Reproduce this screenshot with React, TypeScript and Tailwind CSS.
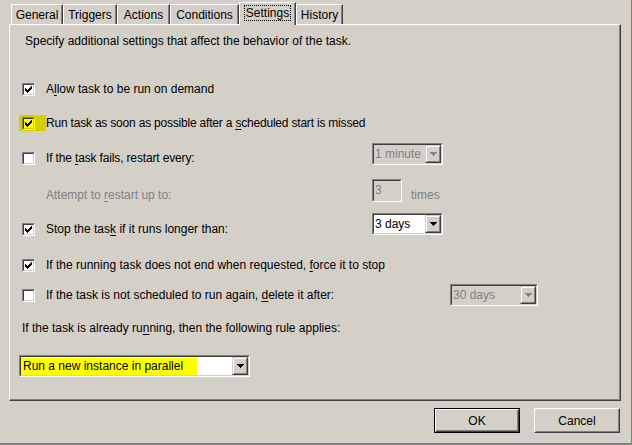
import React from "react";

const FONT = "font-['Tahoma','Liberation_Sans',Arial,sans-serif]";

function CheckMark() {
  return (
    <svg width="7" height="7" viewBox="0 0 7 7" shapeRendering="crispEdges" className="block">
      <path
        fill="#000"
        d="M6 0h1v1h-1z M5 1h2v1h-2z M0 2h1v1h-1z M4 2h3v1h-3z M0 3h2v1h-2z M3 3h3v1h-3z M0 4h5v1h-5z M1 5h3v1h-3z M2 6h1v1h-1z"
      />
    </svg>
  );
}

function Checkbox({ checked, yellow }: { checked: boolean; yellow?: boolean }) {
  return (
    <div
      className={
        "w-[13px] h-[13px] shrink-0 border border-t-[#808080] border-l-[#808080] " +
        (yellow ? "border-r-[#ffff00] border-b-[#ffff00]" : "border-r-white border-b-white")
      }
    >
      <div
        className={
          "w-full h-full border border-t-[#404040] border-l-[#404040] flex items-center justify-center " +
          (yellow
            ? "border-r-[#d4d000] border-b-[#d4d000] bg-[#ffff00]"
            : "border-r-[#d4d0c8] border-b-[#d4d0c8] bg-white")
        }
      >
        {checked ? <CheckMark /> : null}
      </div>
    </div>
  );
}

function Arrow({ disabled }: { disabled?: boolean }) {
  return (
    <svg width="7" height="4" viewBox="0 0 7 4" shapeRendering="crispEdges" className="block">
      <path
        fill={disabled ? "#808080" : "#000"}
        d="M0 0h7v1h-7z M1 1h5v1h-5z M2 2h3v1h-3z M3 3h1v1h-1z"
      />
    </svg>
  );
}

function Sunken({
  className,
  inner,
  children,
}: {
  className?: string;
  inner?: string;
  children?: React.ReactNode;
}) {
  return (
    <div
      className={
        "border border-t-[#808080] border-l-[#808080] border-r-white border-b-white shrink-0 " +
        (className || "")
      }
    >
      <div
        className={
          "w-full h-full border border-t-[#404040] border-l-[#404040] border-r-[#d4d0c8] border-b-[#d4d0c8] " +
          (inner || "")
        }
      >
        {children}
      </div>
    </div>
  );
}

function ArrowButton({ disabled }: { disabled?: boolean }) {
  return (
    <div className="w-[16px] h-full border border-t-[#d4d0c8] border-l-[#d4d0c8] border-r-[#404040] border-b-[#404040] shrink-0">
      <div className="w-full h-full border border-t-white border-l-white border-r-[#808080] border-b-[#808080] bg-[#d4d0c8] flex items-center justify-center">
        <Arrow disabled={disabled} />
      </div>
    </div>
  );
}

function Combo({
  text,
  disabled,
  className,
}: {
  text: string;
  disabled?: boolean;
  className: string;
}) {
  return (
    <Sunken
      className={className}
      inner={"flex " + (disabled ? "bg-[#d4d0c8]" : "bg-white")}
    >
      <div
        className={
          "flex-1 flex items-center pl-[1px] leading-none " +
          (disabled ? "text-[#808080]" : "text-black")
        }
      >
        {text}
      </div>
      <ArrowButton disabled={disabled} />
    </Sunken>
  );
}

function U({ children }: { children: React.ReactNode }) {
  return <span className="underline underline-offset-[2px]">{children}</span>;
}

function Tab({ label, w, selected }: { label: string; w: string; selected?: boolean }) {
  if (selected) {
    return (
      <div
        className={
          w +
          " h-[23px] -mb-[1px] relative z-10 bg-[#d4d0c8] border-t border-l border-white border-r border-r-[#404040] shadow-[inset_-1px_0_0_#808080] flex items-start justify-center pt-[2px]"
        }
      >
        <span className="border border-dotted border-black px-[1px] leading-[14px]">{label}</span>
      </div>
    );
  }
  return (
    <div
      className={
        w +
        " h-[20px] bg-[#d4d0c8] border-t border-l border-white border-r border-r-[#404040] shadow-[inset_-1px_0_0_#808080] flex items-center justify-center"
      }
    >
      {label}
    </div>
  );
}

function Button({ label, def }: { label: string; def?: boolean }) {
  return (
    <div
      className={
        "w-[86px] h-[25px] " +
        (def ? "border border-black" : "")
      }
    >
      <div className="w-full h-full border border-t-white border-l-white border-r-[#404040] border-b-[#404040]">
        <div className="w-full h-full border border-t-[#d4d0c8] border-l-[#d4d0c8] border-r-[#808080] border-b-[#808080] flex items-center justify-center">
          {label}
        </div>
      </div>
    </div>
  );
}

export default function App() {
  return (
    <div
      className={
        "w-[632px] h-[445px] bg-[#d4d0c8] text-black text-[12px] leading-none flex flex-col border-r border-r-[#808080] border-b-2 border-b-[#808080] overflow-hidden " +
        FONT
      }
    >
      {/* Tabs */}
      <div className="h-[24px] shrink-0 flex items-end pl-[11px]">
        <Tab label="General" w="w-[52px]" />
        <Tab label="Triggers" w="w-[54px]" />
        <Tab label="Actions" w="w-[53px]" />
        <Tab label="Conditions" w="w-[69px]" />
        <Tab label="Settings" w="w-[57px]" selected />
        <Tab label="History" w="w-[47px]" />
      </div>

      {/* Panel */}
      <div className="ml-[9px] w-[612px] h-[377px] shrink-0 border-t border-l border-white border-r border-b border-r-[#404040] border-b-[#404040] shadow-[inset_-1px_-1px_0_#808080] flex flex-col pl-[10px]">
        <div className="mt-[8px] h-[16px] pl-[5px] flex items-center">
          Specify additional settings that affect the behavior of the task.
        </div>

        <div className="mt-[30px] h-[20px] pl-[2px] flex items-center">
          <Checkbox checked />
          <span className="ml-[11px]">
            A<U>l</U>low task to be run on demand
          </span>
        </div>

        <div className="mt-[14px] h-[20px] pl-[2px] flex items-center">
          <div className="-ml-[3px] w-[27px] h-[16px] bg-[#d4d000] flex items-center pl-[3px]">
            <Checkbox checked yellow />
          </div>
          <span className="tracking-[-0.2px]">
            Run task as soon as possible after a <U>s</U>cheduled start is missed
          </span>
        </div>

        <div className="mt-[10px] h-[30px] pl-[2px] flex items-center">
          <div className="w-[350px] flex items-center">
            <Checkbox checked={false} />
            <span className="ml-[11px] tracking-[-0.15px]">
              If the <U>t</U>ask fails, restart every:
            </span>
          </div>
          <Combo text="1 minute" disabled className="w-[71px] h-[22px] self-start" />
        </div>

        <div className="mt-[6px] h-[32px] pl-[2px] flex items-center">
          <div className="w-[350px] pl-[24px] text-[#808080]">
            Attempt to <U>r</U>estart up to:
          </div>
          <Sunken className="w-[30px] h-[23px] self-start" inner="bg-[#d4d0c8] text-[#808080] pl-[1px] pt-[3px]">
            3
          </Sunken>
          <span className="ml-[9px] text-[#808080]">times</span>
        </div>

        <div className="mt-[2px] h-[32px] pl-[2px] flex items-center">
          <div className="w-[350px] flex items-center">
            <Checkbox checked />
            <span className="ml-[11px]">
              Stop the tas<U>k</U> if it runs longer than:
            </span>
          </div>
          <Combo text="3 days" className="w-[71px] h-[22px] self-start" />
        </div>

        <div className="mt-[10px] h-[20px] pl-[2px] flex items-center">
          <Checkbox checked />
          <span className="ml-[11px]">
            If the running task does not end when requested, <U>f</U>orce it to stop
          </span>
        </div>

        <div className="mt-[9px] h-[22px] pl-[2px] flex items-center">
          <div className="w-[428px] flex items-center">
            <Checkbox checked={false} />
            <span className="ml-[11px]">
              If the task is not scheduled to run again, <U>d</U>elete it after:
            </span>
          </div>
          <Combo text="30 days" disabled className="w-[88px] h-[22px]" />
        </div>

        <div className="mt-[14px] h-[16px] pl-[2px] flex items-center">
          If the task is already ru<U>n</U>ning, then the following rule applies:
        </div>

        <div className="mt-[19px] -ml-[1px]">
          <Sunken className="w-[231px] h-[22px]" inner="flex bg-white">
            <div className="flex-1 flex items-center">
              <div className="w-[176px] h-[17px] bg-[#ffff00] flex items-center pl-[2px]">
                Run a new instance in parallel
              </div>
            </div>
            <ArrowButton />
          </Sunken>
        </div>
      </div>

      {/* Buttons */}
      <div className="mt-[7px] flex justify-end gap-[14px] pr-[11px]">
        <Button label="OK" def />
        <Button label="Cancel" />
      </div>
    </div>
  );
}
